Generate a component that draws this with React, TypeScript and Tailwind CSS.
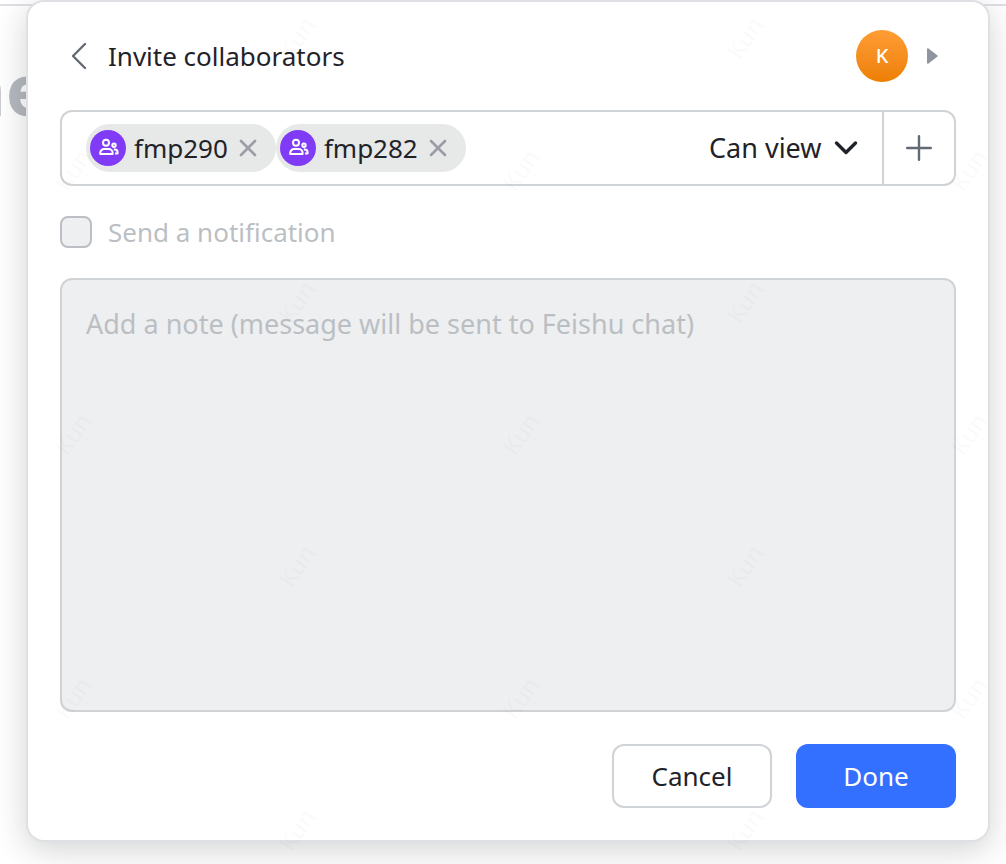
import { useState } from 'react';

interface CollaboratorChipProps {
  name: string;
  onRemove: () => void;
}

function GroupIcon() {
  return (
    <svg width="22" height="20" viewBox="0 0 22 20" fill="none" stroke="white" strokeWidth="2" strokeLinejoin="round" aria-hidden="true">
      <circle cx="9" cy="4.8" r="3" />
      <path d="M3.2 16v-1a4 4 0 0 1 4-4h4.400a4 4 0 0 1 4 4v1z" />
      <circle cx="17" cy="7.2" r="1.7" />
      <path d="M16.800 11.600h1a2.800 2.800 0 0 1 2.800 2.800V15.400h-2.600" />
    </svg>
  );
}

function CollaboratorChip({ name, onRemove }: CollaboratorChipProps) {
  return (
    <li className="flex h-12 items-center rounded-full bg-[#e7e8e8] pl-1 pr-4">
      <span className="flex h-9 w-9 items-center justify-center rounded-full bg-[#7f3bf5]">
        <GroupIcon />
      </span>
      <span className="px-2">{name}</span>
      <button type="button" aria-label={`Remove ${name}`} onClick={onRemove} className="flex h-6 w-6 items-center justify-center">
        <svg width="18" height="18" viewBox="0 0 18 18" stroke="#9a9ea4" strokeWidth="2.6" strokeLinecap="round" aria-hidden="true">
          <path d="M2 2l14 14M16 2L2 16" />
        </svg>
      </button>
    </li>
  );
}

function Watermark() {
  return (
    <svg className="pointer-events-none absolute inset-0 h-full w-full" aria-hidden="true">
      <defs>
        <pattern id="watermark" width="448" height="264" patternUnits="userSpaceOnUse">
          <g fill="#1f2329" fillOpacity="0.025" fontSize="24" textAnchor="middle">
            <text transform="translate(304 43) rotate(-55)">Kun</text>
            <text transform="translate(80 175) rotate(-55)">Kun</text>
          </g>
        </pattern>
      </defs>
      <rect width="100%" height="100%" fill="url(#watermark)" />
    </svg>
  );
}

export default function App() {
  const [members, setMembers] = useState(['fmp290', 'fmp282']);

  return (
    <div className="relative flex min-h-screen flex-col overflow-hidden bg-white pl-[26px] pr-4 pb-[22px] font-['Noto_Sans',sans-serif] text-[26px] leading-10 text-[#1f2329]">
      {/* document behind the dialog */}
      <div className="absolute inset-x-0 top-1 border-t-2 border-[#dee0e3]" />
      <div className="absolute left-[-41px] top-10 text-[72px] leading-[96px] font-bold text-[#b5b9bf]" aria-hidden="true">
        ne
      </div>

      <section
        role="dialog"
        aria-labelledby="invite-title"
        className="relative flex flex-1 flex-col rounded-[18px] border-2 border-[#dee0e3] bg-white px-8 pt-7 pb-8 shadow-[0_8px_32px_rgba(31,35,41,0.2)]"
      >
        <header className="flex items-center justify-between">
          <div className="flex items-center gap-2">
            <button type="button" aria-label="Back" className="flex h-10 w-10 items-center justify-center">
              <svg width="18" height="28" viewBox="0 0 18 28" fill="none" stroke="#646a73" strokeWidth="2.4" strokeLinecap="round" strokeLinejoin="round" aria-hidden="true">
                <path d="M14 2L2 14l12 12" />
              </svg>
            </button>
            <h1 id="invite-title">Invite collaborators</h1>
          </div>
          <div className="flex items-center gap-4 pr-4">
            <span className="flex h-13 w-13 items-center justify-center rounded-full bg-linear-to-b from-[#ff9d33] to-[#ed7f00] text-xl font-medium text-white">
              K
            </span>
            <button type="button" aria-label="Account menu" className="flex h-6 w-4 items-center justify-center">
              <svg width="12" height="16" viewBox="0 0 12 16" fill="#8f959e" aria-hidden="true">
                <path d="M1 1.3C1 .2 1.8 0 2.5.6l8.7 6.6a1 1 0 0 1 0 1.6l-8.7 6.6C1.8 16 1 15.8 1 14.7z" />
              </svg>
            </button>
          </div>
        </header>

        <div className="mt-7 flex h-19 rounded-xl border-2 border-[#d0d3d6]">
          <ul className="flex flex-1 items-center pl-6">
            {members.map((name) => (
              <CollaboratorChip key={name} name={name} onRemove={() => setMembers(members.filter((m) => m !== name))} />
            ))}
          </ul>
          <div className="relative flex items-center pr-6">
            <select aria-label="Permission" defaultValue="view" className="appearance-none bg-transparent pr-9 text-[27px]">
              <option value="view">Can view</option>
              <option value="edit">Can edit</option>
            </select>
            <svg className="pointer-events-none absolute right-6" width="24" height="16" viewBox="0 0 24 16" fill="none" stroke="#1f2329" strokeWidth="3.4" strokeLinecap="round" strokeLinejoin="round" aria-hidden="true">
              <path d="M2.5 3l9.5 9.5L21.5 3" />
            </svg>
          </div>
          <button type="button" aria-label="Add collaborator" className="flex w-18 items-center justify-center border-l-2 border-[#d0d3d6]">
            <svg width="26" height="26" viewBox="0 0 26 26" stroke="#646a73" strokeWidth="2.4" strokeLinecap="round" aria-hidden="true">
              <path d="M13 1.2v23.6M1.2 13h23.6" />
            </svg>
          </button>
        </div>

        <label className="mt-[26px] flex items-center gap-4 text-[#bbbfc4]">
          <input type="checkbox" disabled className="h-8 w-8 appearance-none rounded-lg border-2 border-[#bbbfc4] bg-[#eeeff1]" />
          Send a notification
        </label>

        <textarea
          disabled
          aria-label="Note"
          placeholder="Add a note (message will be sent to Feishu chat)"
          className="mt-[26px] min-h-40 w-full flex-1 resize-none rounded-xl border-2 border-[#d0d3d6] bg-[#eeeff0] px-6 py-6 text-[27px] placeholder:text-[#bbbfc4]"
        />

        <footer className="mt-8 flex justify-end gap-6">
          <button type="button" className="h-16 w-40 rounded-xl border-2 border-[#d0d3d6] bg-white">
            Cancel
          </button>
          <button type="button" className="h-16 w-40 rounded-xl bg-[#3370ff] text-white">
            Done
          </button>
        </footer>
      </section>

      <Watermark />
    </div>
  );
}
